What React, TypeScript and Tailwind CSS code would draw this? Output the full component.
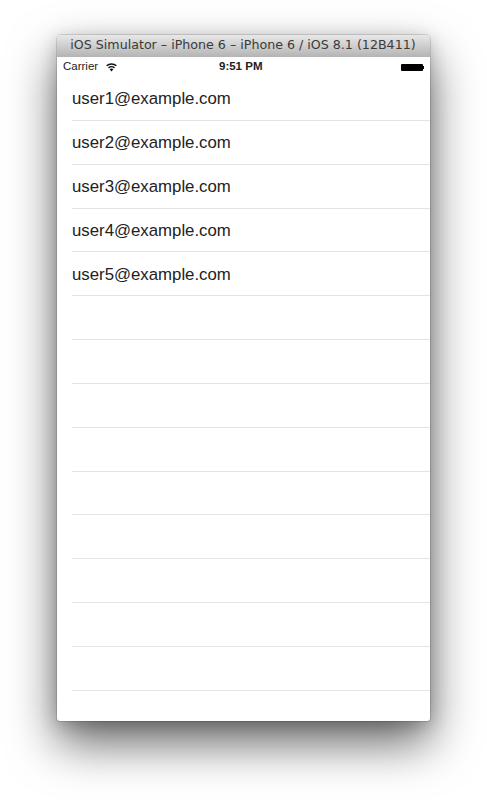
const emails = ["user1@example.com", "user2@example.com", "user3@example.com", "user4@example.com", "user5@example.com"];
const rows = Array.from({ length: 14 }, (_, i) => emails[i] ?? "");

const WifiIcon = () => (
  <svg width="13" height="10" viewBox="0 0 13 10" className="block">
    <path d="M6.5 9.6 4.6 7.3a3 3 0 0 1 3.8 0z" fill="#111" />
    <path d="M3.5 5.9a4.6 4.6 0 0 1 6 0" fill="none" stroke="#111" strokeWidth="1.4" />
    <path d="M1.6 3.8a7.4 7.4 0 0 1 9.8 0" fill="none" stroke="#111" strokeWidth="1.4" />
  </svg>
);

const App = () => {
  return (
    <div className="h-[800px] w-[487px] overflow-hidden bg-white pl-[57px] pt-[35px]">
      <div className="flex h-[686px] w-[373px] flex-col overflow-hidden rounded-t-[4px] rounded-b-[3px] bg-white shadow-[0_22px_48px_rgba(0,0,0,0.6),0_4px_18px_rgba(0,0,0,0.2),0_0_0_1px_rgba(0,0,0,0.12)]">
        <div className="flex h-[22px] shrink-0 items-center justify-center bg-gradient-to-b from-[#e8e8e8] to-[#b4b4b4] pb-px pr-px font-['DejaVu_Sans',sans-serif] text-[12.65px] whitespace-nowrap text-[#3a3a3a]">
          iOS Simulator – iPhone 6 – iPhone 6 / iOS 8.1 (12B411)
        </div>
        <div className="relative flex h-[20px] shrink-0 items-center justify-between pl-[6px] pr-[6px] font-['Liberation_Sans',sans-serif] text-[11.5px] text-[#222]">
          <div className="flex items-center gap-[7px]">
            <span>Carrier</span>
            <WifiIcon />
          </div>
          <span className="absolute left-[162px] font-bold">9:51 PM</span>
          <div className="flex items-center">
            <div className="h-[7px] w-[22px] rounded-[1px] bg-black" />
            <div className="h-[3px] w-px bg-black" />
          </div>
        </div>
        <div className="flex flex-col pl-[15px] font-['Liberation_Sans',sans-serif] text-[16.8px] text-[#222]">
          {rows.map((email, i) => (
            <div key={i} className="flex h-[43.85px] shrink-0 items-center border-b border-[#e4e4e4] pt-px">
              {email}
            </div>
          ))}
        </div>
      </div>
    </div>
  );
};
export default App;
